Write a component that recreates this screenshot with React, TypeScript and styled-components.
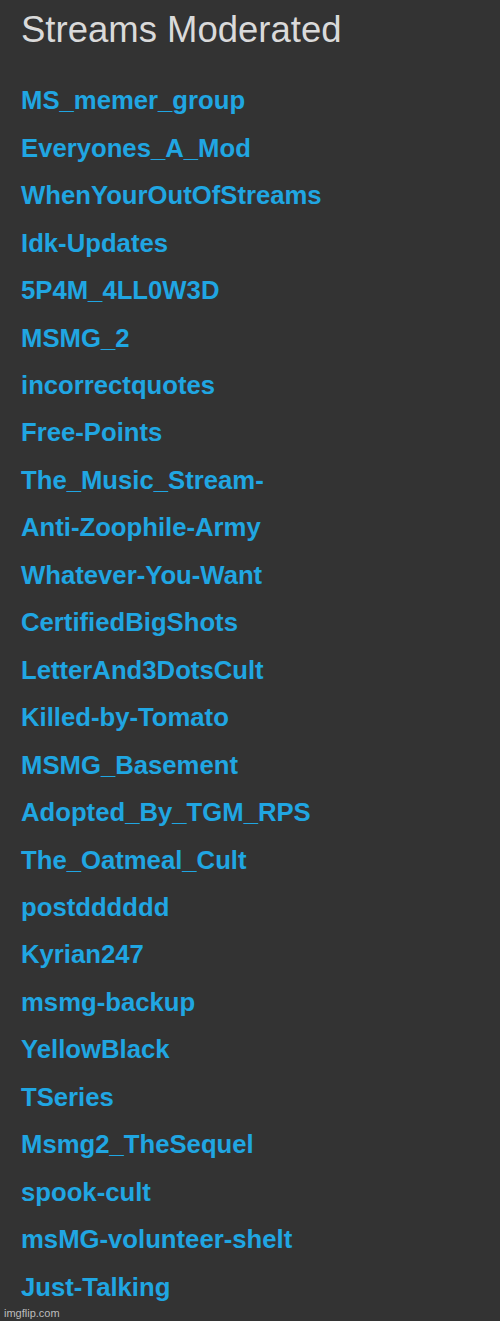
import styled, { createGlobalStyle } from 'styled-components';

const GlobalStyle = createGlobalStyle`
html, body {
  margin: 0;
  padding: 0;
  background-color: #333333;
}
`;

const Panel = styled.div`
position: relative;
width: 500px;
height: 1321px;
box-sizing: border-box;
padding: 11.5px 0 0 21px;
background-color: #333333;
font-family: "Liberation Sans", Arial, sans-serif;
overflow: hidden;
`;

const Title = styled.h2`
margin: 0 0 29.8px 0;
font-size: 36.5px;
line-height: 36px;
font-weight: normal;
color: #dadada;
`;

const StreamList = styled.ul`
list-style-type: none;
padding: 0;
margin: 0;
`;

const StreamItem = styled.li`
font-size: 25.7px;
line-height: 47.45px;
font-weight: bold;
`;

const StreamLink = styled.a`
color: #20a6e2;
text-decoration: none;
`;

const Watermark = styled.div`
position: absolute;
left: 4px;
bottom: 2px;
font-size: 11px;
color: #bdbdbd;
`;

const streams = [
    'MS_memer_group',
    'Everyones_A_Mod',
    'WhenYourOutOfStreams',
    'Idk-Updates',
    '5P4M_4LL0W3D',
    'MSMG_2',
    'incorrectquotes',
    'Free-Points',
    'The_Music_Stream-',
    'Anti-Zoophile-Army',
    'Whatever-You-Want',
    'CertifiedBigShots',
    'LetterAnd3DotsCult',
    'Killed-by-Tomato',
    'MSMG_Basement',
    'Adopted_By_TGM_RPS',
    'The_Oatmeal_Cult',
    'postdddddd',
    'Kyrian247',
    'msmg-backup',
    'YellowBlack',
    'TSeries',
    'Msmg2_TheSequel',
    'spook-cult',
    'msMG-volunteer-shelt',
    'Just-Talking',
];

const App: React.FC = () => {
    return (
        <>
            <GlobalStyle />
            <Panel>
                <Title>Streams Moderated</Title>
                <StreamList>
                    {streams.map((name) => (
                        <StreamItem key={name}>
                            <StreamLink href="#">{name}</StreamLink>
                        </StreamItem>
                    ))}
                </StreamList>
                <Watermark>imgflip.com</Watermark>
            </Panel>
        </>
    );
};

export default App;
